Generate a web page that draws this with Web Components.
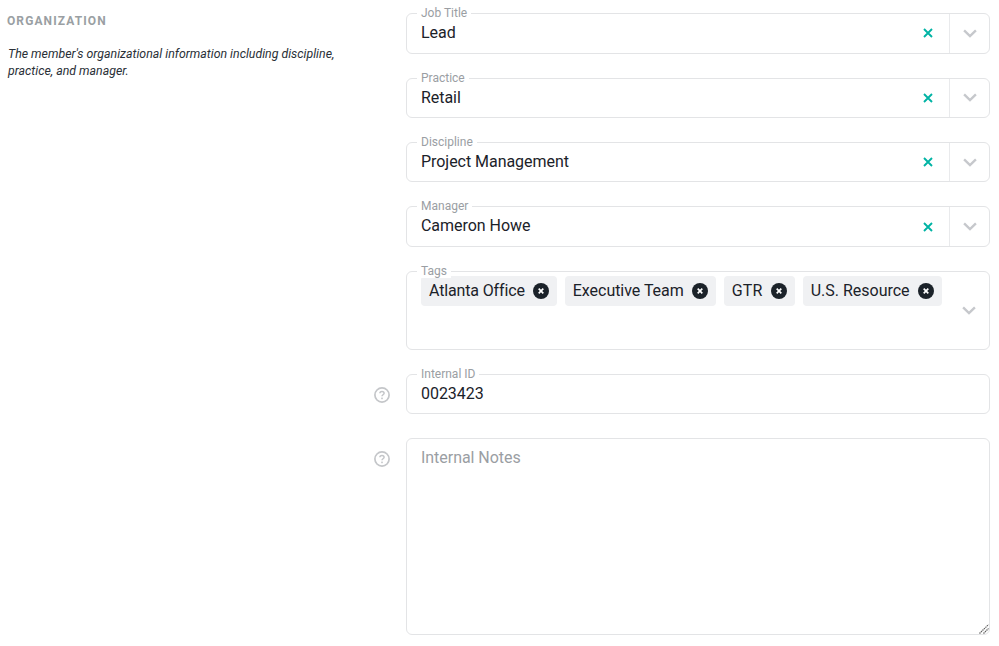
<!DOCTYPE html>
<html><head><meta charset="utf-8"><title>Organization</title>
<style>
html,body{margin:0;background:#fff}
body{font-family:Roboto,"Liberation Sans",sans-serif;color:#1b2229}
</style></head><body>
<org-page>
  <org-intro slot="intro" heading="ORGANIZATION">The member's organizational information including discipline, practice, and manager.</org-intro>
  <org-select label="Job Title" value="Lead"></org-select>
  <org-select label="Practice" value="Retail"></org-select>
  <org-select label="Discipline" value="Project Management"></org-select>
  <org-select label="Manager" value="Cameron Howe"></org-select>
  <org-tags label="Tags"><org-tag style="letter-spacing:-.14px">Atlanta Office</org-tag><org-tag>Executive Team</org-tag><org-tag style="letter-spacing:.2px">GTR</org-tag><org-tag style="letter-spacing:0">U.S. Resource</org-tag></org-tags>
  <org-input label="Internal ID" value="0023423"></org-input>
  <org-notes placeholder="Internal Notes"></org-notes>
</org-page>
<script>
const CHEV='<svg width="14" height="9" viewBox="0 0 14 9" fill="none"><path d="M1.1 1.3 7 7l5.9-5.7" stroke="#c6c8cc" stroke-width="2.4"/></svg>';
const X='<svg width="10" height="10" viewBox="0 0 10 10" fill="none"><path d="M1 1l8 8M9 1l-8 8" stroke="#00b3a4" stroke-width="1.9"/></svg>';
const HELP='<svg width="16" height="16" viewBox="0 0 16 16" fill="none"><circle cx="8" cy="8" r="7.1" stroke="#c4c6c9" stroke-width="1.7"/><path d="M5.9 6.3c0-1.2.9-1.9 2.1-1.9s2.1.7 2.1 1.8c0 1.5-2.1 1.6-2.1 3.1" stroke="#c4c6c9" stroke-width="1.5"/><rect x="7.2" y="10.6" width="1.6" height="1.6" fill="#c4c6c9"/></svg>';
const BOX=`
 :host{display:block;position:relative;box-sizing:border-box;border:1px solid #e3e4e6;border-radius:6px;background:#fff;font:16px/20px Roboto,"Liberation Sans",sans-serif;color:#1b2229;letter-spacing:-.04px}
 .label{position:absolute;left:10px;top:-8px;padding:0 4px;background:#fff;font-size:12px;line-height:14px;color:#9a9ea3;letter-spacing:0}
`;
function def(name,html){customElements.define(name,class extends HTMLElement{
  connectedCallback(){ if(this.shadowRoot) return; const r=this.attachShadow({mode:'open'}); r.innerHTML=html(this); }
});}
def('org-page',()=>`<style>
 :host{display:grid;grid-template-columns:366px 624px;padding:13.2px 0 11px;width:990px}
</style><div><slot name="intro"></slot></div><org-fields><slot></slot></org-fields>`);
def('org-fields',()=>`<style>:host{display:flex;flex-direction:column;gap:24px}::slotted(*){margin-left:40px}</style><slot></slot>`);
def('org-intro',h=>`<style>
 :host{display:block;font-family:Roboto,"Liberation Sans",sans-serif;padding:1px 0 0 7px}
 h2{margin:0 0 18px;font-size:12px;line-height:14px;font-weight:700;letter-spacing:1.1px;color:#9a9fa3}
 p{margin:0 0 0 1px;width:335px;font-size:12.35px;line-height:17px;font-style:italic;color:#2a3037}
</style><h2>${h.getAttribute('heading')}</h2><p><slot></slot></p>`);
def('org-select',h=>`<style>${BOX}
 :host{height:40.4px;display:flex;align-items:center}
 .v{flex:1;padding:0 14px .4px}
 .x{width:10px;height:10px;display:flex;margin-right:16px}
 .c{width:39px;align-self:stretch;border-left:1px solid #e9eaec;display:flex;align-items:center;justify-content:center}
</style><span class="label">${h.getAttribute('label')}</span><span class="v">${h.getAttribute('value')}</span><span class="x">${X}</span><span class="c">${CHEV}</span>`);
def('org-tags',h=>`<style>${BOX}
 :host{height:79px;display:flex}
 .l{flex:1;display:flex;flex-wrap:wrap;gap:8px;align-content:flex-start;padding:4px 0 4px 14px}
 .c{width:40px;display:flex;align-items:center;justify-content:center}
</style><span class="label">${h.getAttribute('label')}</span><div class="l"><slot></slot></div><span class="c">${CHEV}</span>`);
def('org-tag',()=>`<style>
 :host{display:flex;align-items:center;height:30px;padding:0 8px;gap:8px;background:#f0f1f3;border-radius:4px;font-size:16px;color:#1b2229}
 svg{display:block}
</style><slot></slot><svg width="16" height="16" viewBox="0 0 16 16"><circle cx="8" cy="8" r="8" fill="#1b2229"/><path d="M5.7 5.7l4.6 4.6M10.3 5.7l-4.6 4.6" stroke="#fff" stroke-width="1.7"/></svg>`);
def('org-help',()=>`<style>:host{position:absolute;left:-33px;top:12px;width:16px;height:16px;display:block}svg{display:block}</style>${HELP}`);
def('org-input',h=>`<style>${BOX}
 :host{height:40px;display:flex;align-items:center}
 .v{padding:0 14px}
</style><org-help></org-help><span class="label">${h.getAttribute('label')}</span><span class="v">${h.getAttribute('value')}</span>`);
def('org-notes',h=>`<style>${BOX}
 :host{height:197px;padding:9px 14px}
 .p{color:#9a9ea3}
 .g{position:absolute;right:0;bottom:0;display:block}
</style><org-help></org-help><span class="p">${h.getAttribute('placeholder')}</span><svg class="g" width="10" height="10" viewBox="0 0 10 10" fill="none"><path d="M.5 9.5 9.5.5M4.5 9.5l5-5" stroke="#5f5f5f" stroke-width="1.2" stroke-dasharray="1.4 .7"/></svg>`);
</script>
</body></html>
